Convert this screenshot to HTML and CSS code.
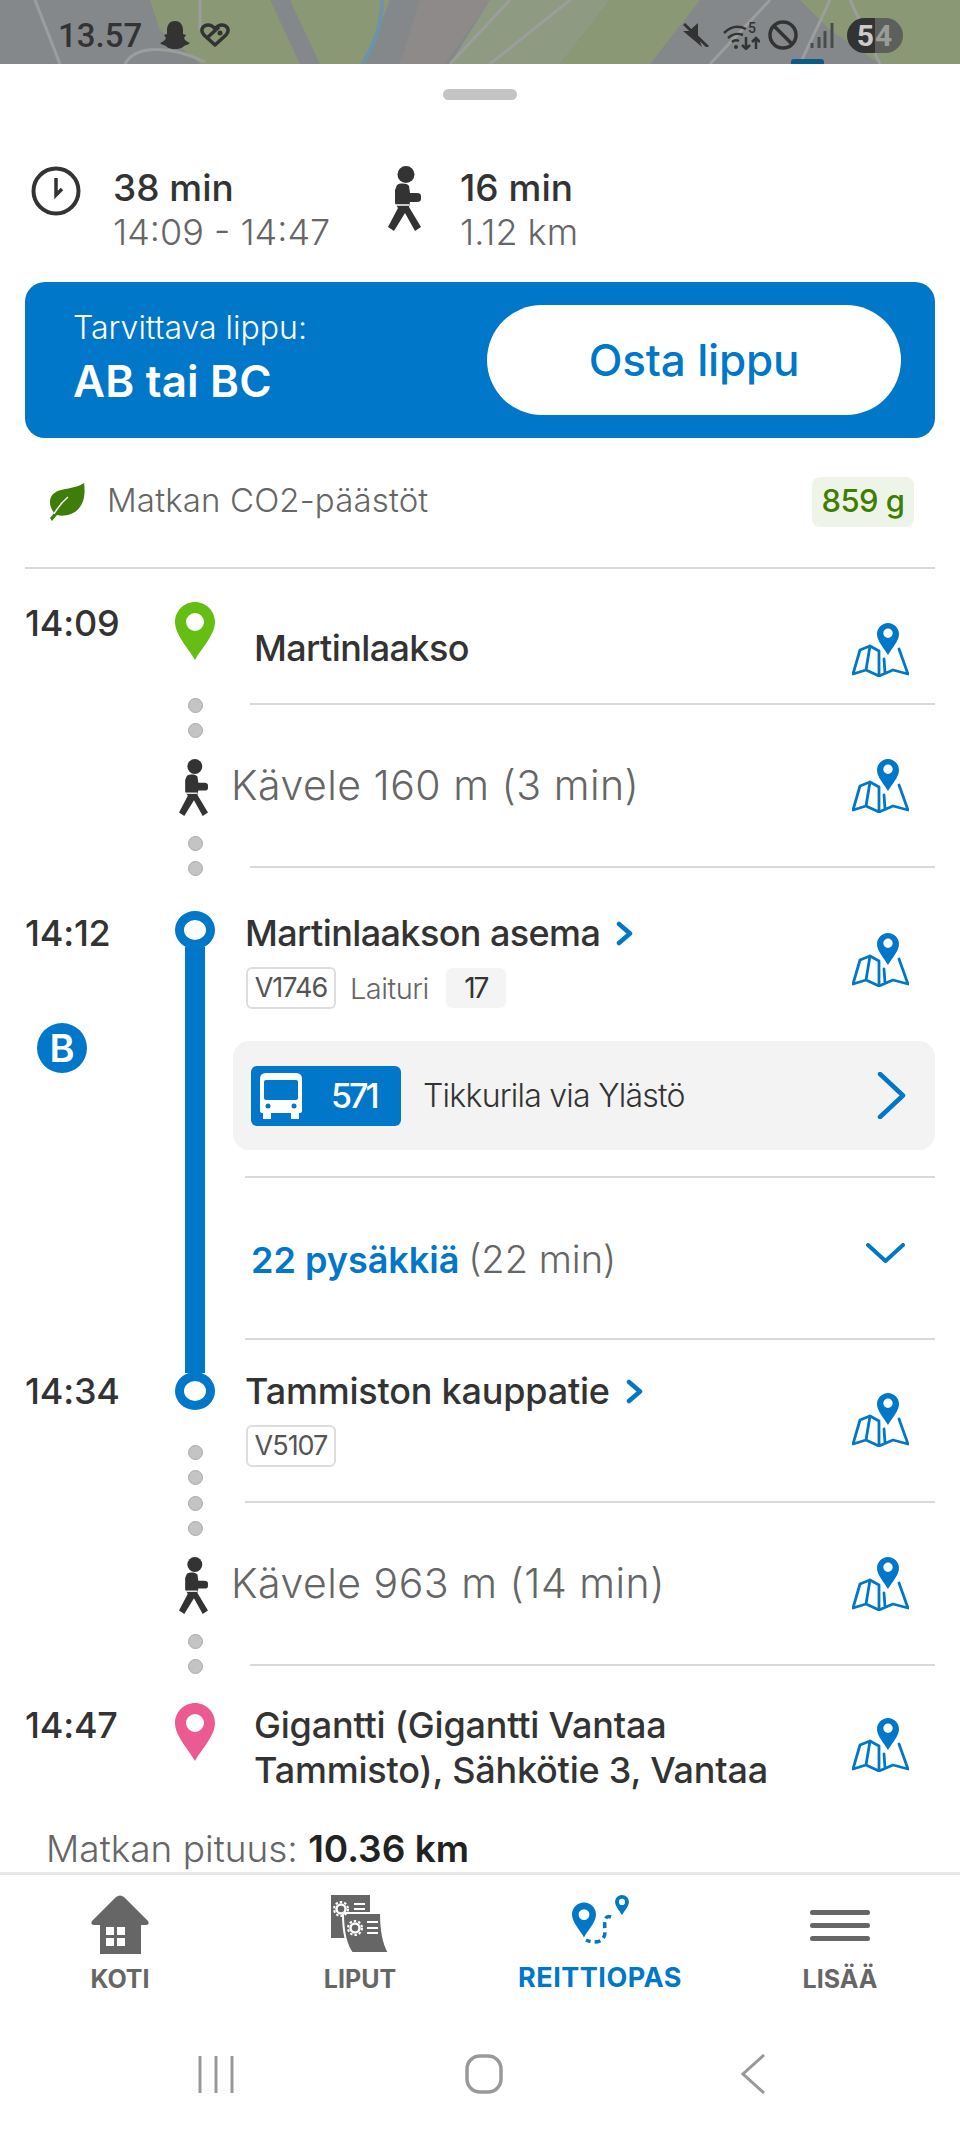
FILE: index.html
```html
<!DOCTYPE html>
<html lang="fi">
<head>
  <meta charset="UTF-8" />
  <title>Reittiopas</title>
  <link rel="stylesheet" href="styles.css">
</head>
<body>

  <!-- Shared icons -->
  <svg class="defs" aria-hidden="true">
    <symbol id="walker" viewBox="0 0 33 65">
      <circle cx="18" cy="8.500" r="8.500" />
      <path d="M9 19C12 17 19 17 21 20L22 27H29Q33 27 33 30V33Q33 36 29 36H22L21 41 33 61 27 65 17 47 6 65 0 61 10 42 8 39 7 37 7 24Z" />
      <path d="M8 39H21" stroke="#fff" stroke-width="1.500" />
    </symbol>
    <symbol id="pin" viewBox="0 0 40 58">
      <path fill-rule="evenodd" d="M20 0C9 0 0 9 0 20 0 33 14 47 20 58 26 47 40 33 40 20 40 9 31 0 20 0ZM20 11A9 9 0 1 1 20 29 9 9 0 1 1 20 11Z" />
    </symbol>
    <symbol id="map" viewBox="0 0 57 54">
      <path fill="#0077c8" fill-rule="evenodd" d="M36 0C30 0 25 5 25 11 25 18 32 25 36 32 40 25 47 18 47 11 47 5 42 0 36 0ZM36 5.500A4.700 4.700 0 1 1 36 14.900 4.700 4.700 0 1 1 36 5.500Z" />
      <path fill="none" stroke="#0077c8" stroke-width="2.800" stroke-linejoin="round" stroke-linecap="round" d="M27 28 18 23 8 27 1 51 14 47 27 53 41 47 56 51 47 26M18 23 14 47M27 28V53M32 36 33 50" />
    </symbol>
    <symbol id="dot-chevron" viewBox="0 0 17 25">
      <path fill="none" stroke="#0077c8" stroke-width="4.500" stroke-linecap="round" stroke-linejoin="round" d="M3 3 14 12.500 3 22" />
    </symbol>
  </svg>

  <div class="map-strip">
    <svg class="map-bg" viewBox="0 0 960 64" preserveAspectRatio="none" aria-hidden="true">
      <rect width="960" height="64" fill="#85888a" />
      <path fill="#8a9876" d="M150 0H270L300 64H200L160 30ZM290 0H390L365 64H320ZM610 0H700L650 64H560ZM800 0H960V64H880L830 30Z" />
      <path fill="#8f9a82" d="M490 0H610L560 64H450Z" />
      <path fill="#8f8a8a" d="M420 0H490L445 64H400Z" />
      <path fill="none" stroke="#9b9e9d" stroke-width="3" d="M35 0 60 64M200 0V30M125 64C135 45 170 45 205 62M510 0 450 64M570 0 490 64M770 0 710 64M830 0 800 64M850 0 880 64" />
      <path fill="none" stroke="#6c93a8" stroke-width="4" d="M382 0C382 25 375 45 362 64" />
      <rect x="791" y="59" width="33" height="8" rx="3" fill="#0b5a8c" />
    </svg>
    <div class="status-bar">
      <div class="status-left">
        <span class="clock-text">13.57</span>
        <svg width="30" height="28" viewBox="0 0 30 28">
          <path fill="#333" d="M15 0C21 0 23 5 23 9V13L26 14 24 17C25 20 28 21 30 22 28 24 25 24 24 25 23 26 21 28 15 28 9 28 7 26 6 25 5 24 2 24 0 22 2 21 5 20 6 17L4 14 7 13V9C7 5 9 0 15 0Z" />
        </svg>
        <svg width="30" height="24" viewBox="0 0 30 24">
          <path fill="none" stroke="#333" stroke-width="3.500" stroke-linejoin="round" d="M15 22 4 12C-1 6 4 2 8 2 11 2 13 3 15 6 17 3 19 2 22 2 26 2 31 6 26 12ZM8 14 19 4" />
          <circle cx="20" cy="10" r="2.500" fill="#333" />
        </svg>
      </div>
      <div class="status-right">
        <svg width="26" height="24" viewBox="0 0 26 24">
          <path fill="#333" d="M0 8H6L15 0V13L19 24 0 8Z" />
          <path d="M1 1 25 24" stroke="#333" stroke-width="3" />
        </svg>
        <svg class="wifi" width="37" height="30" viewBox="0 -2 37 30">
          <g fill="none" stroke="#333" stroke-width="2.500">
            <path d="M1 11C7 5 15 3 23 7M5 16C9 12 15 11 20 13M9 20C11 18 14 18 16 19" />
            <path d="M23 15V27M19 23 23 27 27 23M33 27V16M29 20 33 16 37 20" />
          </g>
          <circle cx="13" cy="25" r="2" fill="#333" />
          <text x="25" y="11" class="wifi-five">5</text>
        </svg>
        <svg class="block-icon" width="30" height="30" viewBox="0 0 30 30">
          <circle cx="15" cy="15" r="13" fill="none" stroke="#333" stroke-width="3.500" />
          <path d="M6 6 24 24" stroke="#333" stroke-width="3.500" />
        </svg>
        <svg width="24" height="25" viewBox="0 0 24 25">
          <path d="M2 20V25M9 14V25M15 8V25M22 0V25" stroke="#4a4c4b" stroke-width="3" />
        </svg>
        <div class="battery"><span class="battery-five">5</span><span class="battery-four">4</span></div>
      </div>
    </div>
  </div>

  <main class="sheet">
    <div class="handle"></div>

    <div class="summary">
      <svg class="summary-clock" width="50" height="50" viewBox="0 0 50 50">
        <circle cx="25" cy="25" r="22.500" fill="none" stroke="#333" stroke-width="4" />
        <path d="M25 12V29L31 23" fill="none" stroke="#333" stroke-width="3.500" />
      </svg>
      <div class="summary-text first">
        <div class="summary-main">38 min</div>
        <div class="summary-sub">14:09 - 14:47</div>
      </div>
      <svg class="summary-walker" width="33" height="65"><use href="#walker" /></svg>
      <div class="summary-text">
        <div class="summary-main">16 min</div>
        <div class="summary-sub">1.12 km</div>
      </div>
    </div>

    <div class="ticket-card">
      <div class="ticket-text">
        <div class="ticket-label">Tarvittava lippu:</div>
        <div class="ticket-zone">AB tai BC</div>
      </div>
      <button class="buy-btn">Osta lippu</button>
    </div>

    <div class="co2">
      <svg class="leaf" width="36" height="38" viewBox="0 0 36 38">
        <path fill="#3e7d0a" d="M35 0C37 14 34 26 22 31 16 33 12 33 8 32L3 38 1 35 5 30C-2 20 0 10 12 7 20 5 30 4 35 0Z" />
        <path d="M5 31C9 24 13 19 19 14" fill="none" stroke="#fff" stroke-width="1.500" />
      </svg>
      <span class="co2-label">Matkan CO2-päästöt</span>
      <span class="co2-value">859 g</span>
    </div>

    <!-- Itinerary -->
    <section class="timeline">

      <div class="row row-start">
        <div class="time">14:09</div>
        <div class="rail"><svg class="pin pin-green" width="40" height="58"><use href="#pin" /></svg></div>
        <div class="body body-wide">
          <div class="place">Martinlaakso</div>
          <svg class="map-icon" width="57" height="54"><use href="#map" /></svg>
        </div>
      </div>

      <div class="row row-walk">
        <div class="time"></div>
        <div class="rail rail-walk">
          <span class="dot"></span><span class="dot"></span>
          <svg class="rail-walker" width="31" height="57"><use href="#walker" /></svg>
          <span class="dot"></span><span class="dot"></span>
        </div>
        <div class="body body-wide body-walk">
          <div class="walk-text">Kävele 160 m (3 min)</div>
          <svg class="map-icon" width="57" height="54"><use href="#map" /></svg>
        </div>
      </div>

      <div class="row row-board">
        <div class="time">
          14:12
          <div class="zone-badge">B</div>
        </div>
        <div class="rail rail-board">
          <span class="ring"></span>
          <span class="bar"></span>
        </div>
        <div class="body body-leg">
          <div class="stop-head">
            <div>
              <div class="stop-name">Martinlaakson asema <svg width="17" height="25"><use href="#dot-chevron" /></svg></div>
              <div class="tags">
                <span class="stop-tag">V1746</span>
                <span class="platform-label">Laituri</span>
                <span class="platform">17</span>
              </div>
            </div>
            <svg class="map-icon" width="57" height="54"><use href="#map" /></svg>
          </div>
          <div class="route-card">
            <div class="route-badge">
              <svg width="42" height="46" viewBox="0 0 42 46">
                <path fill="#fff" d="M6 0H36Q42 0 42 6V38Q42 40 39 40V46H31V40H11V46H3V40Q0 40 0 38V6Q0 0 6 0Z" />
                <rect x="4" y="7" width="34" height="20" rx="2" fill="#0077c8" />
                <circle cx="8" cy="33" r="2.500" fill="#0077c8" />
                <circle cx="34" cy="33" r="2.500" fill="#0077c8" />
              </svg>
              <span class="route-num">571</span>
            </div>
            <span class="route-dest">Tikkurila via Ylästö</span>
            <svg class="route-chevron" width="29" height="47" viewBox="0 0 29 47">
              <path d="M3 2 26 23.500 3 45" fill="none" stroke="#0077c8" stroke-width="4.500" stroke-linecap="round" stroke-linejoin="round" />
            </svg>
          </div>
        </div>
      </div>

      <div class="row row-stops">
        <div class="time"></div>
        <div class="rail"><span class="bar"></span></div>
        <div class="body body-leg body-stops">
          <div class="stops-text"><b>22 pysäkkiä</b> (22 min)</div>
          <svg class="stops-chevron" width="39" height="20" viewBox="0 0 39 20">
            <path d="M2 2 19.500 18 37 2" fill="none" stroke="#0077c8" stroke-width="4" stroke-linecap="round" stroke-linejoin="round" />
          </svg>
        </div>
      </div>

      <div class="row row-alight">
        <div class="time">14:34</div>
        <div class="rail">
          <span class="bar bar-short"></span>
          <span class="ring ring-end"></span>
          <span class="dot dot-first"></span><span class="dot"></span>
        </div>
        <div class="body body-leg">
          <div class="stop-head">
            <div>
              <div class="stop-name">Tammiston kauppatie <svg width="17" height="25"><use href="#dot-chevron" /></svg></div>
              <div class="tags"><span class="stop-tag">V5107</span></div>
            </div>
            <svg class="map-icon" width="57" height="54"><use href="#map" /></svg>
          </div>
        </div>
      </div>

      <div class="row row-walk">
        <div class="time"></div>
        <div class="rail rail-walk">
          <span class="dot"></span><span class="dot"></span>
          <svg class="rail-walker" width="31" height="57"><use href="#walker" /></svg>
          <span class="dot"></span><span class="dot"></span>
        </div>
        <div class="body body-wide body-walk">
          <div class="walk-text">Kävele 963 m (14 min)</div>
          <svg class="map-icon" width="57" height="54"><use href="#map" /></svg>
        </div>
      </div>

      <div class="row row-end">
        <div class="time">14:47</div>
        <div class="rail"><svg class="pin pin-pink" width="40" height="58"><use href="#pin" /></svg></div>
        <div class="body body-wide body-last">
          <div class="place">Gigantti (Gigantti Vantaa<br>Tammisto), Sähkötie 3, Vantaa</div>
          <svg class="map-icon" width="57" height="54"><use href="#map" /></svg>
        </div>
      </div>
    </section>

    <div class="total">Matkan pituus: <b>10.36 km</b></div>
  </main>

  <nav class="tabbar">
    <div class="tab">
      <div class="tab-icon">
        <svg width="58" height="59" viewBox="0 0 58 59">
          <path fill="#666" d="M9 59V30H3Q-1 30 1 26L25 2Q29-1 33 2L57 26Q59 30 55 30H50V59Z" />
          <path fill="#fff" d="M15 32h8v8h-8zM26 32h8v8h-8zM15 43h8v8h-8zM26 43h8v8h-8z" />
        </svg>
      </div>
      <span class="tab-label">KOTI</span>
    </div>
    <div class="tab">
      <div class="tab-icon">
        <svg width="58" height="58" viewBox="0 0 58 58">
          <rect width="39" height="43" fill="#666" />
          <path fill="#666" stroke="#fff" stroke-width="2" d="M12 18H50C50 35 52 48 58 58H21C15 50 12 35 12 18Z" />
          <g fill="none" stroke="#fff">
            <circle cx="10" cy="14" r="4.500" stroke-width="2.500" />
            <circle cx="10" cy="14" r="7" stroke-width="2" stroke-dasharray="2.500 2" />
            <circle cx="24" cy="33" r="4.500" stroke-width="2.500" />
            <circle cx="24" cy="33" r="7" stroke-width="2" stroke-dasharray="2.500 2" />
            <path stroke-width="2" d="M23 9H34M23 14H34M36 27H47M36 33H47M36 38H47" />
          </g>
        </svg>
      </div>
      <span class="tab-label">LIPUT</span>
    </div>
    <div class="tab tab-active">
      <div class="tab-icon">
        <svg width="57" height="50" viewBox="0 0 57 50">
          <use href="#pin" x="0" y="7" width="24" height="36" fill="#0077c8" />
          <use href="#pin" x="43" y="0" width="14" height="20" fill="#0077c8" />
          <path d="M39 22C33 20 32 25 33 35 34 48 22 49 14 45" fill="none" stroke="#0077c8" stroke-width="3.500" stroke-dasharray="6 4" />
        </svg>
      </div>
      <span class="tab-label">REITTIOPAS</span>
    </div>
    <div class="tab">
      <div class="tab-icon tab-icon-menu">
        <span class="menu-line"></span><span class="menu-line"></span><span class="menu-line"></span>
      </div>
      <span class="tab-label">LISÄÄ</span>
    </div>
  </nav>

  <div class="system-nav">
    <svg width="36" height="38" viewBox="0 0 36 38">
      <path d="M2 1V38M18 1V38M34 1V38" stroke="#999" stroke-width="3" />
    </svg>
    <svg width="38" height="40" viewBox="0 0 38 40">
      <rect x="2" y="2" width="34" height="36" rx="13" fill="none" stroke="#999" stroke-width="3.500" />
    </svg>
    <svg class="system-back" width="24" height="40" viewBox="0 0 24 40">
      <path d="M23 1 2 20 23 39" fill="none" stroke="#999" stroke-width="3" />
    </svg>
  </div>

</body>
</html>
```

FILE: styles.css
```css
/* Reset */
* {
  box-sizing: border-box;
}

html, body {
  margin: 0;
  height: 2133px;
  overflow: hidden;
}

body {
  font-family: Inter, 'Noto Sans', sans-serif;
  background: #fff;
  color: #333;
  width: 960px;
}

.defs {
  position: absolute;
  width: 0;
  height: 0;
}

b {
  font-weight: 600;
}

/* Dimmed map and status bar */
.map-strip {
  position: relative;
  height: 64px;
  overflow: hidden;
}
.map-bg {
  position: absolute;
  top: 0;
  left: 0;
  width: 960px;
  height: 64px;
}
.status-bar {
  position: relative;
  display: flex;
  justify-content: space-between;
  align-items: center;
  height: 70px;
  padding: 0 57px 0 58px;
}
.status-left {
  display: flex;
  align-items: center;
  gap: 10px;
}
.clock-text {
  font-family: Roboto, sans-serif;
  font-size: 33px;
  font-weight: 500;
  margin-right: 8px;
}
.status-right {
  display: flex;
  align-items: center;
  gap: 8px;
}
.status-right svg:first-child {
  margin-right: 6px;
}
.block-icon {
  margin-right: 4px;
}
.wifi-five {
  font-family: Roboto, sans-serif;
  font-size: 14px;
  font-weight: 500;
  fill: #333;
}
.battery {
  display: flex;
  width: 56px;
  height: 35px;
  margin-left: 5px;
  border-radius: 18px;
  overflow: hidden;
  font-family: Roboto, sans-serif;
  font-size: 30px;
  font-weight: 700;
  line-height: 35px;
}
.battery span {
  width: 28px;
}
.battery-five {
  background: #333;
  color: #ccc;
  text-align: right;
  padding-right: 1px;
}
.battery-four {
  background: #5c5f5b;
  color: #9a9c9a;
  text-align: left;
  padding-left: 0;
}

/* Sheet */
.handle {
  width: 74px;
  height: 11px;
  margin: 25px auto 0;
  background: #c4c4c4;
  border-radius: 6px;
}

.summary {
  display: flex;
  align-items: flex-start;
  margin-top: 65px;
  padding-left: 31px;
  height: 90px;
}
.summary-clock {
  margin: 1px 32px 0 0;
  flex-shrink: 0;
}
.summary-walker {
  margin: 1px 39px 0 0;
  flex-shrink: 0;
  fill: #333;
}
.summary-text.first {
  width: 275px;
}
.summary-main {
  font-size: 37px;
  font-weight: 500;
  line-height: 45px;
}
.summary-sub {
  font-size: 36px;
  font-weight: 300;
  line-height: 45px;
  color: #666;
}

.ticket-card {
  display: flex;
  justify-content: space-between;
  align-items: center;
  height: 156px;
  margin: 27px 25px 0;
  padding: 0 34px 0 48px;
  background: #0077c8;
  border-radius: 20px;
  color: #fff;
}
.ticket-text {
  padding-bottom: 6px;
}
.ticket-label {
  font-size: 32px;
  font-weight: 300;
  line-height: 40px;
}
.ticket-zone {
  margin-top: 8px;
  font-size: 44px;
  font-weight: 600;
  line-height: 50px;
  letter-spacing: 0.2px;
}
.buy-btn {
  width: 414px;
  height: 110px;
  border: none;
  border-radius: 55px;
  background: #fff;
  color: #0077c8;
  font-family: inherit;
  font-size: 44px;
  font-weight: 500;
  letter-spacing: -0.2px;
}

.co2 {
  display: flex;
  align-items: center;
  height: 50px;
  margin: 39px 46px 0 49px;
}
.co2-label {
  margin: 0 0 5px 22px;
  font-size: 33px;
  font-weight: 300;
  color: #666;
  letter-spacing: 0.15px;
}
.co2-value {
  margin-left: auto;
  width: 102px;
  height: 50px;
  background: #eef5e8;
  border-radius: 8px;
  color: #3d8000;
  font-size: 31px;
  font-weight: 500;
  line-height: 48px;
  text-align: center;
  letter-spacing: -0.5px;
}

/* Itinerary */
.timeline {
  margin: 40px 25px 0;
  border-top: 2px solid #d9d9d9;
}
.row {
  display: grid;
  grid-template-columns: 130px 80px 1fr;
  grid-template-rows: minmax(0, 1fr);
}
.row-start {
  height: 136px;
}
.row-walk {
  height: 163px;
}
.row-board {
  height: 310px;
}
.row-stops {
  height: 162px;
}
.row-alight {
  height: 163px;
}
.row-end {
  height: 160px;
}

.time {
  font-size: 36px;
  font-weight: 500;
  line-height: 45px;
  letter-spacing: -0.2px;
}
.row-start .time {
  padding-top: 32px;
}
.row-board .time {
  padding-top: 43px;
}
.row-alight .time {
  padding-top: 29px;
}
.row-end .time {
  padding-top: 37px;
}
.zone-badge {
  width: 50px;
  height: 50px;
  margin: 67px 0 0 12px;
  background: #0077c8;
  border-radius: 50%;
  color: #fff;
  font-size: 38px;
  font-weight: 600;
  line-height: 50px;
  text-align: center;
}

.rail {
  display: flex;
  flex-direction: column;
  align-items: center;
  position: relative;
}
.row-start .rail {
  padding-top: 33px;
}
.row-end .rail {
  padding-top: 37px;
}
.rail-board {
  padding-top: 43px;
}
.rail-walk {
  margin: -7px 0 -8px;
  z-index: 1;
}
.pin-green {
  fill: #64be14;
}
.pin-pink {
  fill: #eb5a90;
}
.ring {
  flex-shrink: 0;
  width: 40px;
  height: 38px;
  border: 9px solid #0077c8;
  border-radius: 50%;
  background: #fff;
}
.bar {
  flex: 1;
  width: 20px;
  margin-top: -2px;
  background: #0077c8;
}
.row-stops .bar {
  margin-top: 0;
}
.bar-short {
  flex: none;
  height: 33px;
  margin: 0 0 -1px;
}
.ring-end {
  margin-top: 0;
}
.dot {
  flex-shrink: 0;
  width: 15px;
  height: 15px;
  margin-bottom: 10px;
  background: #c4c4c4;
  border: 1px solid #aaa;
  border-radius: 50%;
}
.dot-first {
  margin-top: 35px;
}
.rail-walker {
  fill: #333;
  flex-shrink: 0;
  margin: 11px 0 20px -3px;
}

.body {
  position: relative;
  border-bottom: 2px solid #d9d9d9;
}
.body-wide {
  display: flex;
  justify-content: space-between;
  align-items: flex-start;
  margin-left: 15px;
  padding-right: 26px;
}
.body-leg {
  margin-left: 10px;
}
.body-walk {
  align-items: center;
}
.body-last {
  border-bottom: none;
}
.place {
  padding: 57px 0 0 4px;
  font-size: 36px;
  font-weight: 500;
  line-height: 45px;
  letter-spacing: -0.6px;
}
.body-last .place {
  padding-top: 37px;
  letter-spacing: -0.2px;
}
.map-icon {
  flex-shrink: 0;
  margin-top: 54px;
}
.body-last .map-icon {
  margin-top: 52px;
}
.body-walk .map-icon {
  margin-top: 0;
}
.walk-text {
  margin-left: -19px;
  font-size: 41px;
  font-weight: 300;
  color: #666;
  line-height: 45px;
  letter-spacing: 0.5px;
}

.stop-head {
  display: flex;
  justify-content: space-between;
  align-items: flex-start;
  padding: 43px 26px 0 0;
}
.row-alight .stop-head {
  padding-top: 29px;
}
.stop-head .map-icon {
  margin-top: 22px;
}
.row-alight .stop-head .map-icon {
  margin-top: 24px;
}
.stop-name {
  display: flex;
  align-items: center;
  gap: 16px;
  font-size: 36px;
  font-weight: 500;
  line-height: 45px;
  letter-spacing: -0.6px;
}
.row-alight .stop-name {
  letter-spacing: -0.2px;
}
.tags {
  display: flex;
  align-items: center;
  margin: 11px 0 0 1px;
  height: 42px;
}
.stop-tag {
  width: 90px;
  height: 42px;
  border: 2px solid #ddd;
  border-radius: 6px;
  font-size: 27px;
  font-weight: 400;
  line-height: 38px;
  color: #555;
  text-align: center;
  letter-spacing: -1px;
}
.platform-label {
  margin-left: 14px;
  font-size: 29px;
  font-weight: 300;
  color: #666;
  letter-spacing: -0.5px;
}
.platform {
  width: 60px;
  height: 40px;
  margin-left: 17px;
  background: #f4f4f4;
  border-radius: 6px;
  font-size: 28px;
  line-height: 40px;
  text-align: center;
  letter-spacing: -2px;
}

.route-card {
  display: flex;
  align-items: center;
  height: 109px;
  margin: 32px 0 0 -12px;
  padding: 0 29px 0 18px;
  background: #f3f3f3;
  border-radius: 16px;
}
.route-badge {
  display: flex;
  align-items: center;
  width: 150px;
  height: 60px;
  padding-left: 9px;
  background: #0077c8;
  border-radius: 6px;
  color: #fff;
}
.route-num {
  margin-left: 29px;
  font-size: 34px;
  font-weight: 500;
  letter-spacing: -3px;
}
.route-dest {
  margin-left: 22px;
  font-size: 32px;
  font-weight: 300;
  letter-spacing: -0.75px;
}
.route-chevron {
  margin-left: auto;
}

.body-stops {
  display: flex;
  justify-content: space-between;
  align-items: flex-start;
  padding: 59px 30px 0 6px;
}
.stops-text {
  font-size: 38px;
  font-weight: 300;
  line-height: 45px;
  color: #666;
}
.stops-text b {
  margin-right: -2px;
  font-size: 36px;
  color: #0077c8;
}
.stops-chevron {
  margin-top: 6px;
}

.total {
  height: 46px;
  padding-left: 46px;
  font-size: 37px;
  font-weight: 300;
  line-height: 45px;
  color: #666;
}
.total b {
  color: #222;
}

/* Bottom tabs */
.tabbar {
  display: grid;
  grid-template-columns: repeat(4, 1fr);
  border-top: 3px solid #e8e8e8;
  padding-top: 20px;
}
.tab {
  display: flex;
  flex-direction: column;
  align-items: center;
  color: #666;
}
.tab-active {
  color: #0077c8;
}
.tab-icon {
  height: 60px;
}
.tab-icon-menu {
  display: flex;
  flex-direction: column;
  gap: 8px;
  padding-top: 15px;
}
.menu-line {
  display: block;
  width: 60px;
  height: 5px;
  background: #666;
  border-radius: 3px;
}
.tab-label {
  margin-top: 9px;
  font-size: 25px;
  font-weight: 700;
  line-height: 30px;
}
.tab-active .tab-label {
  margin-top: 8px;
  font-size: 27px;
  letter-spacing: 0.5px;
}

.system-nav {
  display: flex;
  justify-content: center;
  align-items: center;
  gap: 231px;
  padding: 60px 0 0 3px;
}
.system-back {
  margin-left: 7px;
}
```
